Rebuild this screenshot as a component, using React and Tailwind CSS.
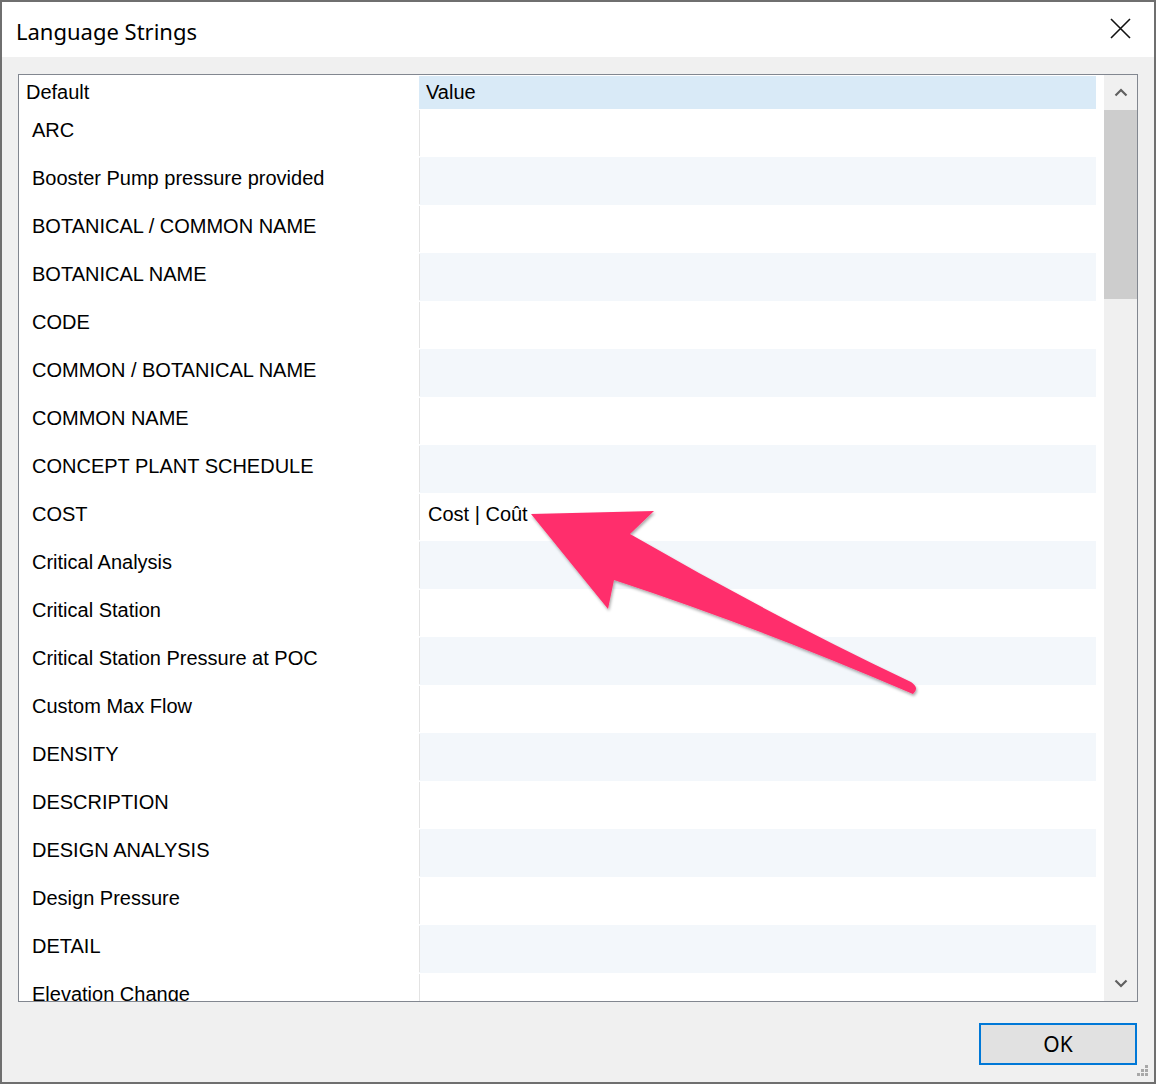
import React from "react";

const rows = [
  ["ARC", ""],
  ["Booster Pump pressure provided", ""],
  ["BOTANICAL / COMMON NAME", ""],
  ["BOTANICAL NAME", ""],
  ["CODE", ""],
  ["COMMON / BOTANICAL NAME", ""],
  ["COMMON NAME", ""],
  ["CONCEPT PLANT SCHEDULE", ""],
  ["COST", "Cost | Coût"],
  ["Critical Analysis", ""],
  ["Critical Station", ""],
  ["Critical Station Pressure at POC", ""],
  ["Custom Max Flow", ""],
  ["DENSITY", ""],
  ["DESCRIPTION", ""],
  ["DESIGN ANALYSIS", ""],
  ["Design Pressure", ""],
  ["DETAIL", ""],
  ["Elevation Change", ""],
  ["Emitter", ""],
];

export default function App() {
  return (
    <div className="relative w-[1156px] h-[1084px] border-2 border-[#6f6f6f] bg-[#f0f0f0] flex flex-col overflow-hidden">
      {/* Title bar */}
      <div className="h-[55px] bg-white flex items-center justify-between pl-[14px] pr-[23px] shrink-0">
        <div className="text-[22px] leading-[30px] text-black pt-[3px]" style={{ fontFamily: '"Segoe UI", "Noto Sans", sans-serif' }}>
          Language Strings
        </div>
        <svg width="21" height="21" viewBox="0 0 21 21" className="mb-[3px]">
          <path d="M1 1 L20 20 M20 1 L1 20" stroke="#111" strokeWidth="1.6" fill="none" />
        </svg>
      </div>

      {/* Body */}
      <div className="flex-1 flex flex-col pt-[17px] px-[16px]">
        <div
          className="w-[1120px] h-[928px] border border-[#828790] bg-white flex overflow-hidden"
          style={{ fontFamily: '"Liberation Sans", Arial, sans-serif' }}
        >
          <div className="w-[1084px] pt-[1px] flex flex-col overflow-hidden">
            {/* header */}
            <div className="flex h-[33px] shrink-0">
              <div className="w-[400px] pl-[7px] pt-[4px] text-[20px] leading-[24px] text-black">Default</div>
              <div className="w-[677px] bg-[#d9eaf7] pl-[7px] pt-[4px] text-[20px] leading-[24px] text-black">Value</div>
            </div>
            {rows.map(([k, v], i) => (
              <div key={k} className="flex h-[48px] shrink-0">
                <div className="w-[400px] pl-[13px] pt-[9px] text-[20px] leading-[24px] text-black whitespace-nowrap">{k}</div>
                <div className={`w-[677px] flex ${i % 2 === 1 ? "bg-[#f3f7fb]" : "bg-white"}`}>
                  <div className="w-px my-px bg-[#e3e3e3]" />
                  <div className="pl-[8px] pt-[9px] text-[20px] leading-[24px] text-black whitespace-nowrap">{v}</div>
                </div>
              </div>
            ))}
          </div>
          {/* scrollbar */}
          <div className="w-[33px] ml-[1px] bg-[#f0f0f0] flex flex-col h-full">
            <div className="h-[35px] flex items-center justify-center shrink-0">
              <svg width="14" height="9" viewBox="0 0 14 9">
                <path d="M1.5 7.5 L7 2 L12.5 7.5" stroke="#606060" strokeWidth="2.2" fill="none" />
              </svg>
            </div>
            <div className="h-[189px] bg-[#cdcdcd] shrink-0" />
            <div className="flex-1" />
            <div className="h-[35px] flex items-center justify-center shrink-0">
              <svg width="14" height="9" viewBox="0 0 14 9">
                <path d="M1.5 1.5 L7 7 L12.5 1.5" stroke="#606060" strokeWidth="2.2" fill="none" />
              </svg>
            </div>
          </div>
        </div>

        {/* bottom */}
        <div className="flex justify-end mt-[21px] pr-[1px]">
          <button
            className="w-[158px] h-[42px] border-2 border-[#0078d7] bg-[#e1e1e1] text-[21px] leading-[28px] text-black flex items-center justify-center"
            style={{ fontFamily: '"Segoe UI", "Noto Sans", sans-serif' }}
          >
            OK
          </button>
        </div>
      </div>

      {/* resize grip */}
      <svg className="absolute right-[6px] bottom-[6px]" width="12" height="12" viewBox="0 0 12 12">
        <rect x="9" y="1" width="3" height="3" fill="#a8a8a8" />
        <rect x="5" y="5" width="3" height="3" fill="#a8a8a8" />
        <rect x="9" y="5" width="3" height="3" fill="#a8a8a8" />
        <rect x="1" y="9" width="3" height="3" fill="#a8a8a8" />
        <rect x="5" y="9" width="3" height="3" fill="#a8a8a8" />
        <rect x="9" y="9" width="3" height="3" fill="#a8a8a8" />
      </svg>

      {/* annotation arrow */}
      <svg className="absolute left-[-2px] top-[-2px] pointer-events-none" width="1156" height="1084" viewBox="0 0 1156 1084">
        <defs>
          <filter id="sh" x="-10%" y="-10%" width="120%" height="120%">
            <feDropShadow dx="1" dy="2" stdDeviation="1.5" floodColor="#000" floodOpacity="0.35" />
          </filter>
        </defs>
        <path
          d="M531 514 L654 511 L630 534 Q770 615 911 682 Q920 688 913 694 Q760 628 614 580 L608 609 Z"
          fill="#ff2e6c"
          filter="url(#sh)"
        />
      </svg>
    </div>
  );
}
